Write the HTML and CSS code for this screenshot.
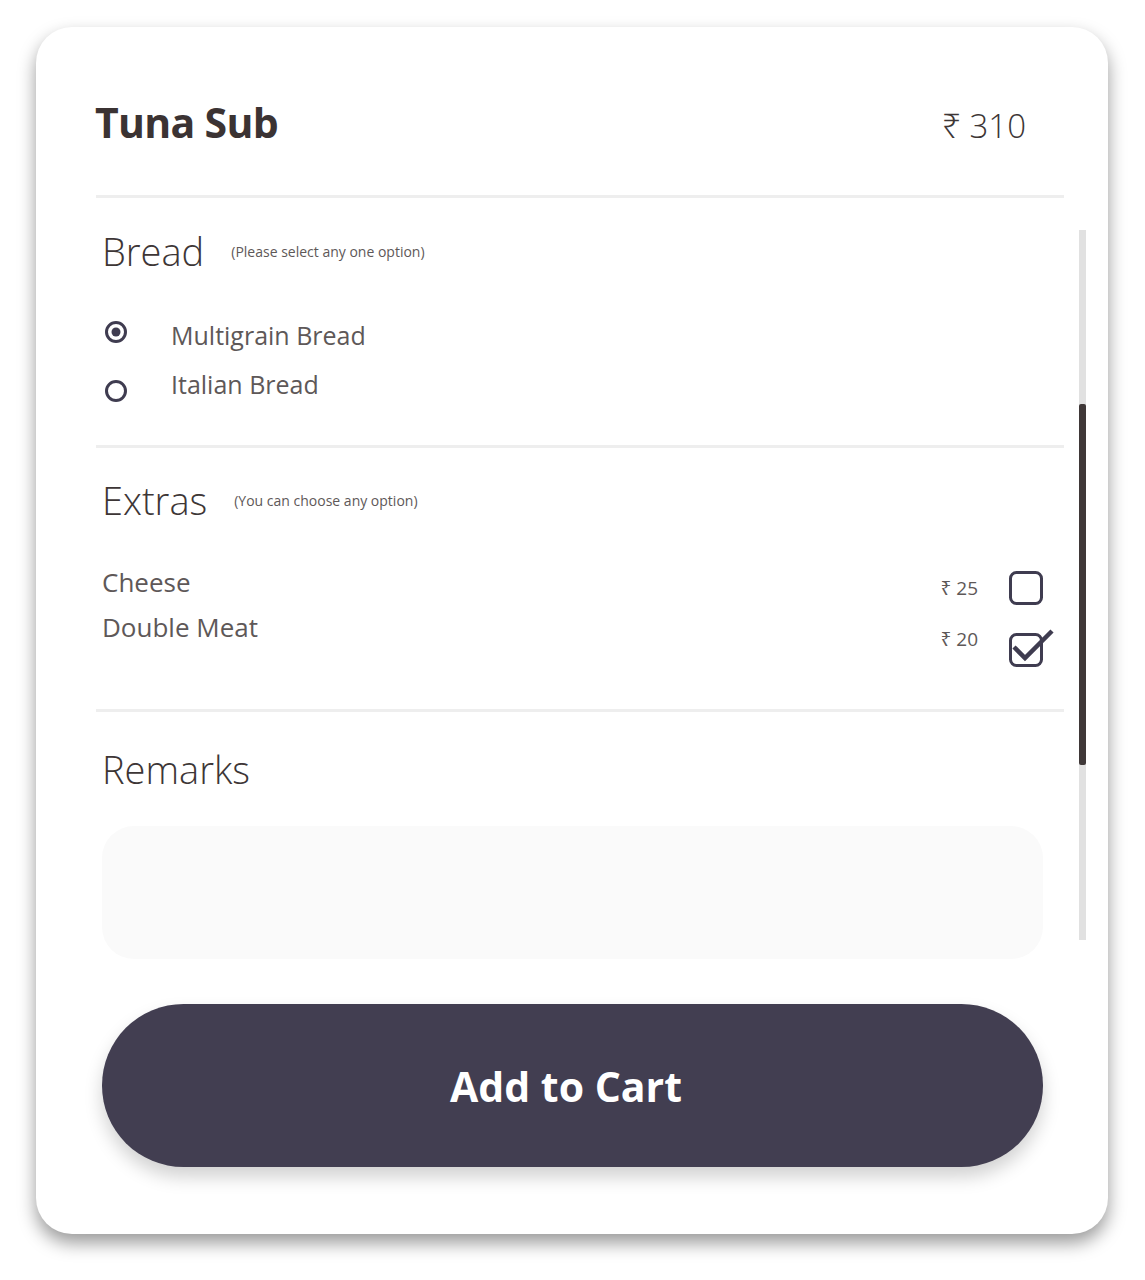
FILE: index.html
```html
<!DOCTYPE html>
<html>
<head>
<meta charset="utf-8">
<link rel="stylesheet" href="styles.css">
</head>
<body>
<div class="card">
  <div class="header">
    <h1 class="title">Tuna Sub</h1>
    <div class="price">₹ 310</div>
  </div>
  <div class="divider"></div>
  <div class="scroll">
    <div class="scroll-content">
      <section class="section bread">
        <div class="sec-head">
          <h2 class="sec-title">Bread</h2>
          <span class="sec-note">(Please select any one option)</span>
        </div>
        <div class="radio-group">
          <div class="radio-col">
            <svg class="radio" width="24" height="24" viewBox="0 0 24 24"><circle cx="12" cy="12" r="9.5" fill="none" stroke="#3f3c50" stroke-width="3"/><circle cx="12" cy="12" r="4.5" fill="#3f3c50"/></svg>
            <svg class="radio" width="24" height="24" viewBox="0 0 24 24"><circle cx="12" cy="12" r="9.5" fill="none" stroke="#3f3c50" stroke-width="3"/></svg>
          </div>
          <div class="label-col">
            <div class="opt">Multigrain Bread</div>
            <div class="opt">Italian Bread</div>
          </div>
        </div>
      </section>
      <div class="divider inner"></div>
      <section class="section extras">
        <div class="sec-head">
          <h2 class="sec-title">Extras</h2>
          <span class="sec-note">(You can choose any option)</span>
        </div>
        <div class="extras-grid">
          <div class="extra-labels">
            <div class="extra">Cheese</div>
            <div class="extra">Double Meat</div>
          </div>
          <div class="extra-prices">
            <div class="xprice">₹ 25</div>
            <div class="xprice">₹ 20</div>
          </div>
          <div class="extra-checks">
            <svg class="check" width="34" height="34" viewBox="0 0 34 34"><rect x="1.5" y="1.5" width="31" height="31" rx="6" fill="none" stroke="#3f3c50" stroke-width="3"/></svg>
            <svg class="check" width="34" height="34" viewBox="0 0 34 34" overflow="visible"><rect x="1.5" y="1.5" width="31" height="31" rx="6" fill="none" stroke="#3f3c50" stroke-width="3"/><path d="M5 14 L16 25 L43 -2" fill="none" stroke="#3f3c50" stroke-width="4.5" stroke-linejoin="miter"/></svg>
          </div>
        </div>
      </section>
      <div class="divider inner"></div>
      <section class="section remarks">
        <h2 class="sec-title">Remarks</h2>
        <div class="textarea"></div>
      </section>
    </div>
    <div class="track"><div class="thumb"></div></div>
  </div>
  <button class="cart-btn">Add to Cart</button>
</div>
</body>
</html>
```
FILE: styles.css
```css
* { box-sizing: border-box; }
html, body { margin: 0; padding: 0; background: #ffffff; }
body { font-family: "Open Sans", "Noto Sans", "DejaVu Sans", sans-serif; color: #3d3636; padding-bottom: 46px; }

.card {
  margin: 27px 0 0 36px;
  width: 1072px;
  height: 1207px;
  background: #ffffff;
  border-radius: 36px;
  box-shadow: 0 9px 18px rgba(0,0,0,0.4);
  padding: 0 22px 0 60px;
  display: flex;
  flex-direction: column;
}

.header {
  display: flex;
  justify-content: space-between;
  align-items: baseline;
  padding: 72px 38px 50px 0;
  width: 968px;
}
.title {
  margin: 0;
  font-size: 41px;
  line-height: 46px;
  font-weight: 700;
  letter-spacing: -0.7px;
  color: #3b3333;
  margin-left: -1px;
}
.price {
  font-size: 33px;
  line-height: 1;
  font-weight: 300;
  color: #3d3636;
}

.divider {
  width: 968px;
  height: 3px;
  background: #eeeeee;
  flex: none;
}

.scroll {
  display: flex;
  gap: 15px;
  height: 766px;
  flex: none;
}
.scroll-content { width: 968px; flex: none; }
.track {
  width: 7px;
  height: 710px;
  margin-top: 32px;
  background: #e1e1e1;
}
.thumb {
  margin-top: 174px;
  height: 361px;
  background: #3f3838;
  border-radius: 2px;
}

.section { padding: 0 21px 0 6px; }
.bread { padding-top: 33px; padding-bottom: 36px; }
.extras { padding-top: 32px; padding-bottom: 42px; }
.remarks { padding-top: 37px; }

.sec-head { display: flex; align-items: center; gap: 27px; }
.sec-title {
  margin: 0;
  font-size: 38px;
  line-height: 40px;
  font-weight: 300;
  color: #3d3636;
}
.sec-note { font-size: 14px; color: #5e5858; font-weight: 400; }

.radio-group { display: flex; margin-top: 40px; }
.radio-col {
  display: flex;
  flex-direction: column;
  gap: 35px;
  padding-left: 2px;
  padding-top: 9px;
  width: 69px;
}
.radio { display: block; }
.label-col { display: flex; flex-direction: column; }
.opt {
  font-size: 25px;
  line-height: 49px;
  color: #5e5858;
  font-weight: 400;
}

.extras-grid { display: flex; margin-top: 40px; }
.extra-labels { flex: 1; }
.extra {
  font-size: 26px;
  line-height: 45px;
  color: #5e5858;
}
.extra-prices { padding-top: 3px; margin-right: 31px; text-align: right; }
.xprice {
  font-size: 19px;
  line-height: 51px;
  color: #5e5858;
  font-weight: 400;
}
.extra-checks {
  display: flex;
  flex-direction: column;
  gap: 28px;
  padding-top: 11px;
}
.check { display: block; overflow: visible; }

.remarks .sec-title { margin-bottom: 37px; }
.textarea {
  height: 133px;
  background: #fafafa;
  border-radius: 32px;
}

.cart-btn {
  margin: 0 0 0 6px;
  width: 941px;
  height: 163px;
  border: none;
  border-radius: 82px;
  background: #423e51;
  color: #ffffff;
  font-family: "Open Sans", "Noto Sans", sans-serif;
  font-size: 41px;
  font-weight: 700;
  padding: 0 13px 0 0;
  box-shadow: 0 10px 18px rgba(0,0,0,0.18);
  margin-top: 40px;
  flex: none;
}
```
